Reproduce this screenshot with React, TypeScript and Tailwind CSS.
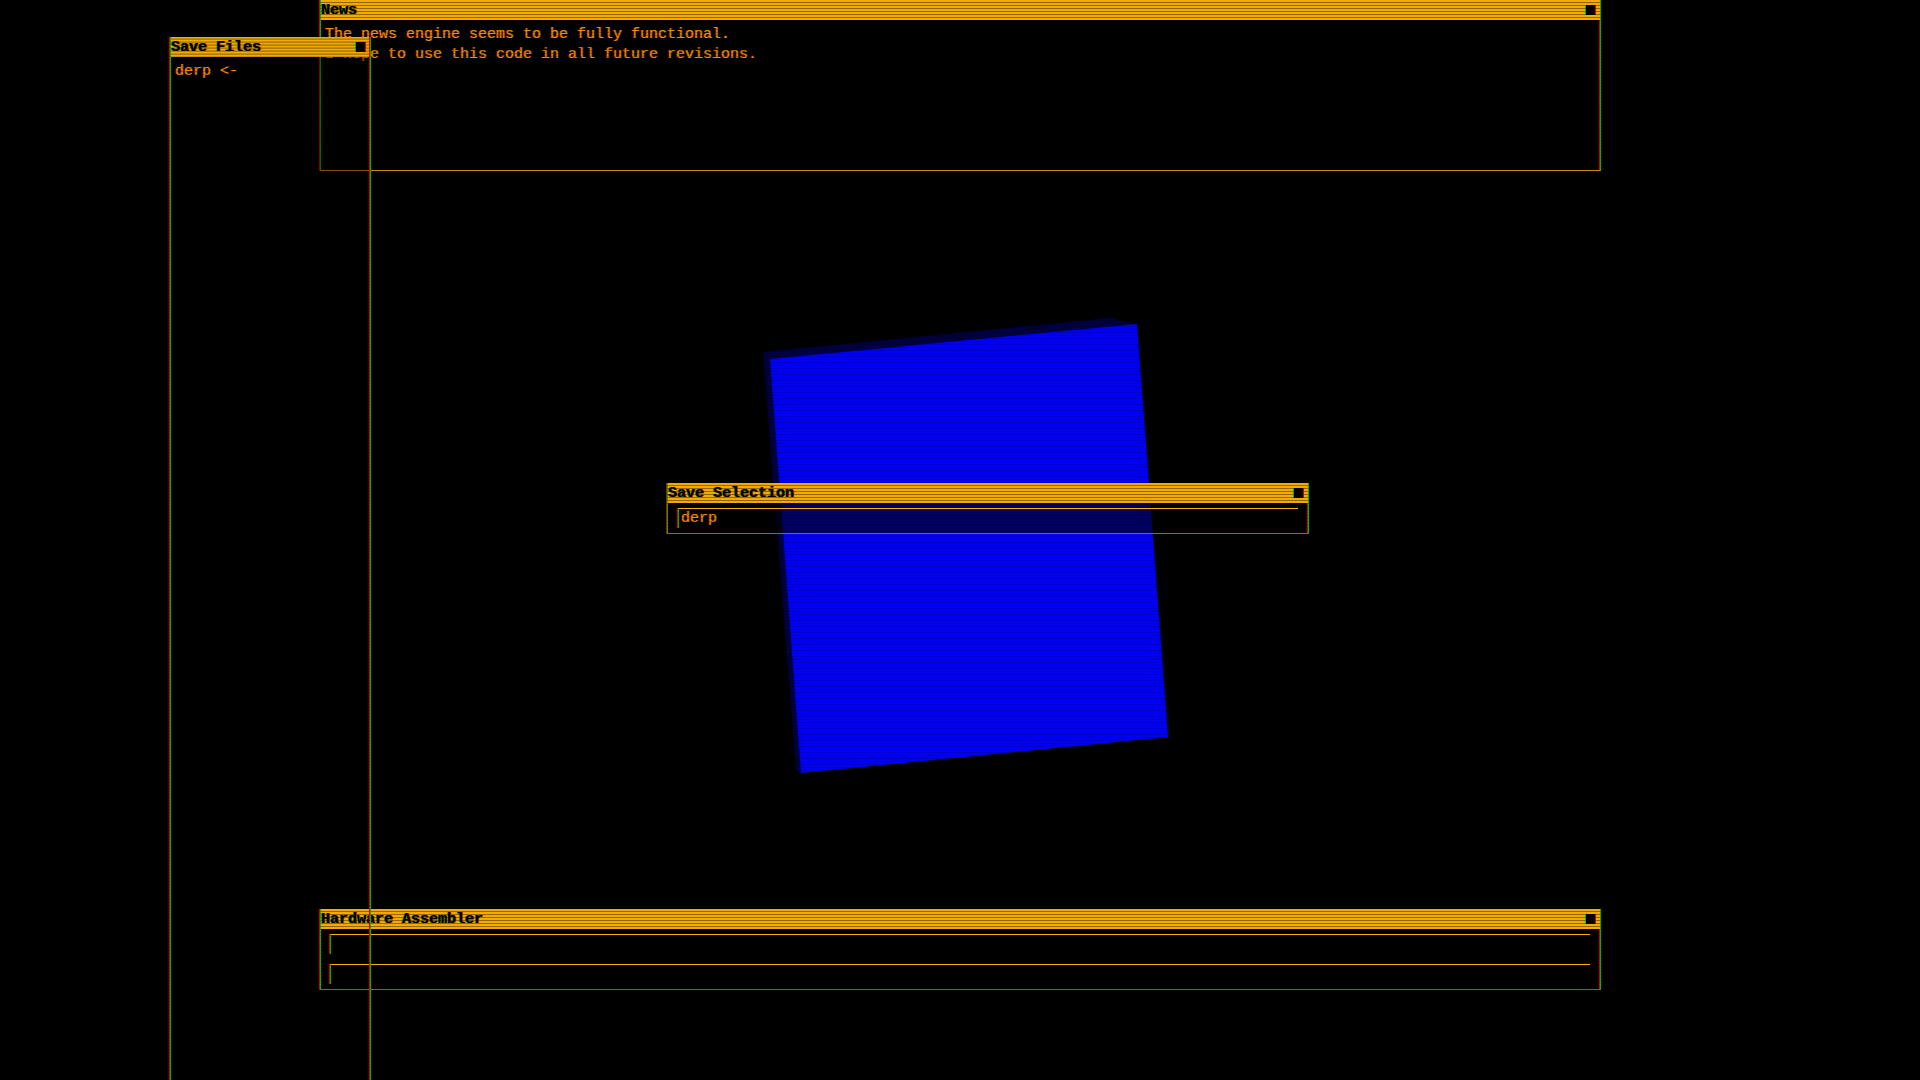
import React from "react";

const mono = "font-['Liberation_Mono','Courier_New',monospace]";
const edges = "border-x border-[#00c000] shadow-[-1px_0_0_#e00000,inset_-1px_0_0_#e00000]";
const glow = "text-[#ee8c00] [text-shadow:-1px_0_rgba(255,0,0,0.6),1px_0_rgba(0,200,0,0.3)]";

function CloseBox() {
  return (
    <div className="absolute right-[4px] top-[5px] h-[10px] w-[11px] border-x border-l-[#00c000] border-r-[#e00000] bg-black" />
  );
}

function TitleBar({ title }: { title: string }) {
  return (
    <div className="relative h-[20px] shrink-0 bg-[repeating-linear-gradient(to_bottom,#f2aa00_0px,#f2aa00_2px,#b47c00_2px,#b47c00_3px)] pt-[1px] text-[15px] font-bold leading-[19px] text-black [text-shadow:-1px_0_rgba(0,150,0,0.8),1px_0_rgba(210,0,0,0.8)]">
      {title}
      <CloseBox />
    </div>
  );
}

function InputLine({ value }: { value?: string }) {
  return (
    <div
      className={`h-[20px] border-t border-l border-t-[#ffb000] border-l-[#00c000] shadow-[-1px_0_0_#e00000] pl-[2px] text-[15px] leading-[19px] ${glow}`}
    >
      {value}
    </div>
  );
}

export default function App() {
  return (
    <div className={`relative h-[1080px] w-[1920px] overflow-hidden bg-black ${mono}`}>
      {/* the spinning block */}
      <svg className="pointer-events-none absolute inset-0 z-0" width="1920" height="1080" viewBox="0 0 1920 1080">
        <polygon points="763,352 1110,318 1137,324 770,359 801,773 796,770" fill="#000040" />
        <polygon points="770,359 1137,324 1168,737 801,773" fill="#0000f4" />
      </svg>

      {/* News */}
      <div className={`absolute left-[320px] top-0 z-10 flex h-[171px] w-[1281px] flex-col border-b border-b-[#f4a800] bg-black ${edges}`}>
        <TitleBar title="News" />
        <div className={`pl-[4px] pt-[5px] text-[15px] leading-[20px] ${glow}`}>
          <div>The news engine seems to be fully functional.</div>
          <div>I hope to use this code in all future revisions.</div>
        </div>
      </div>

      {/* Save Files */}
      <div className={`absolute left-[170px] top-[37px] z-20 flex h-[1043px] w-[201px] flex-col bg-black/40 ${edges}`}>
        <TitleBar title="Save Files" />
        <div className={`pl-[4px] pt-[5px] text-[15px] leading-[20px] ${glow}`}>derp &lt;-</div>
      </div>

      {/* Save Selection */}
      <div className={`absolute left-[667px] top-[483px] z-30 flex h-[51px] w-[642px] flex-col border-b border-b-[#a8861c] bg-black/60 ${edges}`}>
        <TitleBar title="Save Selection" />
        <div className="px-[10px] pt-[5px]">
          <InputLine value="derp" />
        </div>
      </div>

      {/* Hardware Assembler */}
      <div className={`absolute left-[320px] top-[909px] z-30 flex h-[81px] w-[1281px] flex-col border-b border-b-[#a67a1c] bg-black ${edges}`}>
        <TitleBar title="Hardware Assembler" />
        <div className="flex flex-col gap-[10px] pl-[9px] pr-[10px] pt-[5px]">
          <InputLine />
          <InputLine />
        </div>
      </div>

      {/* Save Files right edge drawn over everything */}
      <div className="pointer-events-none absolute left-[369px] top-[37px] z-40 h-[1043px] w-[2px] border-l border-r border-l-[#e00000] border-r-[#00c000]" />

      {/* scanlines */}
      <div className="pointer-events-none absolute inset-0 z-50 bg-[repeating-linear-gradient(to_bottom,transparent_0px,transparent_2px,rgba(0,0,0,0.18)_2px,rgba(0,0,0,0.18)_3px)]" />
    </div>
  );
}
